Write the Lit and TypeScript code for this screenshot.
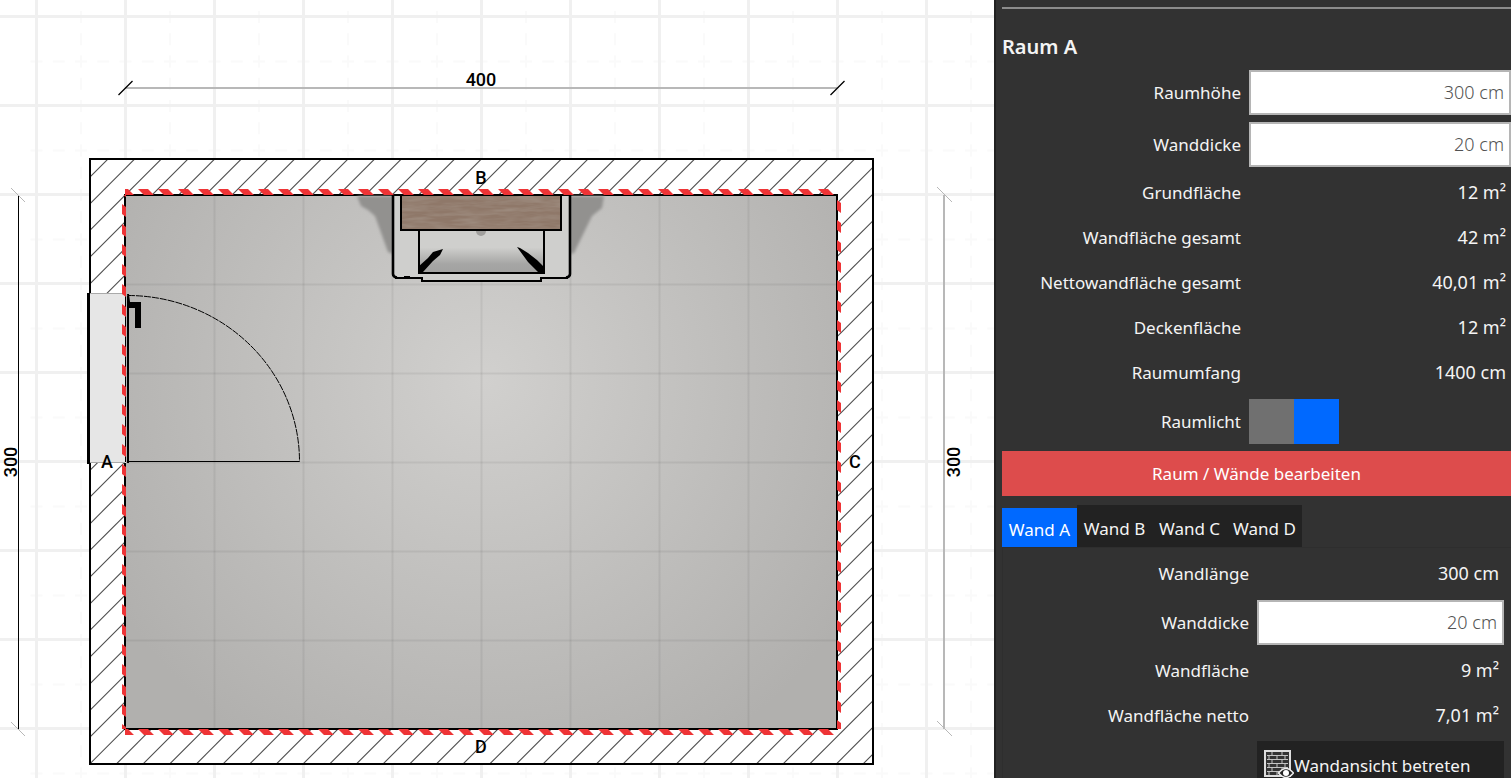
import { LitElement, html, svg, css } from "lit";
import { customElement, state } from "lit/decorators.js";

const range = (n: number) => Array.from({ length: n }, (_, i) => i);

@customElement("room-plan")
class RoomPlan extends LitElement {
  static styles = css`
    :host { display: block; overflow: hidden; background: #fff; }
    svg { display: block; width: 100%; height: 100%; }
    text { font: 500 18px Roboto, sans-serif; fill: #000; text-anchor: middle; }
    .line { stroke: #000; fill: none; }
    .soft { stroke: #b8b8b8; fill: none; }
    .red { fill: #ee3436; }
    .hatch { stroke: #4c4c4c; stroke-width: 1.1; fill: none; }
  `;

  private grid() {
    return svg`
      <g stroke="#fafafa" stroke-width="2" stroke-dasharray="12 10.25">
        ${range(12).map((i) => svg`<path d="M${-8 + i * 89} 11V800"/>`)}
        ${range(9).map((i) => svg`<path d="M30.5 ${61.5 + i * 89}H1600"/>`)}
      </g>
      <g stroke="#f0f0f0" stroke-width="3">
        ${range(18).map((i) => svg`<path d="M${36.5 + i * 89} 0V2000"/>`)}
        ${range(18).map((i) => svg`<path d="M0 ${16.5 + i * 89}H2000"/>`)}
      </g>`;
  }

  private stripes() {
    return svg`
      <g class="red">
        <g clip-path="url(#across)">
          ${range(37).map((i) => svg`<path d="M${118 + i * 20} 189h10l6 6h-10zM${118 + i * 20} 729h10l6 6h-10z"/>`)}
        </g>
        <g clip-path="url(#down)">
          ${range(28).map((i) => svg`<path d="M122 ${184 + i * 20}l4 3v10l-4-3zM837 ${180 + i * 20}l4 3v10l-4-3z"/>`)}
        </g>
      </g>`;
  }

  private basin() {
    return svg`
      <g>
        <path filter="url(#soft)" fill="#92918f" d="M357 196L393 196V254L388 252L375 216L368 210L361 206zM570 196H604L602 208L592 216L574 253L570 254z"/>
        <path fill="#cfcfcd" d="M393 196H570V277H541V281H421V277H393z"/>
        <rect x="419" y="231" width="125" height="41" fill="url(#bowl)"/>
        <circle cx="481" cy="231" r="5" fill="#a09f9d"/>
        <path class="line" stroke-width="2.6" d="M393 195V274Q393 277 397 277.500M570 195V274Q570 277 566 277.500"/>
        <path class="line" stroke-width="2" d="M395 278H422V281H541V278H568M404 277h6"/>
        <path class="line" stroke-width="2" d="M419 231V272M418 273H545M544 231V272"/>
        <path d="M418 267L428 258L433 252L443 249L440 255L433 261L423 272L418 274zM517 247L520 248L528 253L537 260L545 268V273H539L528 262z"/>
        <rect x="401" y="196" width="160" height="34" fill="#8f7869"/>
        <rect x="401" y="196" width="160" height="34" filter="url(#wood)"/>
        <rect class="line" x="401" y="195" width="160" height="35" stroke-width="2"/>
      </g>`;
  }

  private door() {
    return svg`
      <g>
        <rect x="90" y="294" width="36" height="169" fill="#e6e6e6"/>
        <path stroke="#aaa" d="M90 293.500H125M90 462.500H125"/>
        <path class="line" stroke-width="3" d="M88.500 293V464"/>
        <path class="line" stroke-width="1" d="M125.500 294V462"/>
        <path class="line" stroke-width="2" d="M128 296V463"/>
        <path class="line" stroke-width="1" d="M128 461.500H299.500"/>
        <path class="line" stroke-width="1" stroke-dasharray="7 1" d="M128 295.500A172 166 0 0 1 299.500 461.500"/>
        <path d="M127 294h2l1 8h11v26h-6v-20h-6z"/>
      </g>`;
  }

  render() {
    return html`
      <svg role="img" aria-label="Grundriss Raum A">
        <defs>
          <radialGradient id="floor" gradientUnits="userSpaceOnUse" cx="485" cy="380" r="430">
            <stop offset="0" stop-color="#d1d0ce"/>
            <stop offset="1" stop-color="#b1b0ae"/>
          </radialGradient>
          <linearGradient id="bowl" x2="0" y2="1">
            <stop offset="0" stop-color="#cfcfcd"/>
            <stop offset=".4" stop-color="#cfcfcd"/>
            <stop offset=".8" stop-color="#a6a6a5"/>
            <stop offset="1" stop-color="#a2a2a1"/>
          </linearGradient>
          <filter id="soft"><feGaussianBlur stdDeviation="1.500"/></filter>
          <filter id="wood" x="0" y="0" width="1" height="1">
            <feTurbulence type="fractalNoise" baseFrequency=".035 .25" numOctaves="3" seed="4"/>
            <feColorMatrix values="0 0 0 0 .38  0 0 0 0 .31  0 0 0 0 .26  1.200 0 0 0 -.4"/>
          </filter>
          <clipPath id="across"><rect x="125" y="180" width="712" height="560"/></clipPath>
          <clipPath id="down"><rect x="120" y="195" width="724" height="534"/></clipPath>
          <clipPath id="walls">
            <path clip-rule="evenodd" d="M90 159H873V764H90zM125 195V729H837V195z"/>
          </clipPath>
        </defs>
        ${this.grid()}
        <rect x="90" y="159" width="783" height="605" fill="#fff"/>
        <g class="hatch" clip-path="url(#walls)">
          ${range(54).map((i) => svg`<path d="M${107 + (i * 80) / 3 + 10} 150l-700 700"/>`)}
        </g>
        <rect x="125" y="195" width="712" height="534" fill="url(#floor)"/>
        <g stroke="#000" stroke-opacity=".06" stroke-width="2">
          ${range(7).map((i) => svg`<path d="M${214.5 + i * 89} 196V728"/>`)}
          ${range(5).map((i) => svg`<path d="M126 ${284.5 + i * 89}H836"/>`)}
        </g>
        <rect class="line" x="90" y="159" width="783" height="605" stroke-width="2"/>
        <rect class="line" x="125" y="195" width="712" height="534" stroke-width="2"/>
        ${this.basin()} ${this.door()} ${this.stripes()}
        <path class="soft" stroke-width="2" d="M125 88H837M944 195V729"/>
        <path class="line" stroke-width="1" d="M18.500 195V729"/>
        <path class="line" stroke-width="1.300" d="M118.500 95L132.500 81M830.500 95L844.500 81"/>
        <path class="soft" stroke-width="1" d="M11 188L25 202M11 722L25 736M937 187L952 202M937 721L952 736"/>
        <text x="481" y="86">400</text>
        <text transform="translate(17 462) rotate(-90)">300</text>
        <text transform="translate(960 462) rotate(-90)">300</text>
        <text x="107" y="468">A</text>
        <text x="481" y="184">B</text>
        <text x="855" y="468">C</text>
        <text x="481" y="753">D</text>
      </svg>`;
  }
}

@customElement("room-panel")
class RoomPanel extends LitElement {
  @state() private wall = "A";

  static styles = css`
    :host {
      display: block; box-sizing: border-box; background: #323232; color: #f4f4f4;
      border-left: 2px solid #222; padding: 7px 0 0 6px; overflow: auto; scrollbar-width: none;
      font: 17px/27px "Noto Sans", sans-serif;
    }
    hr { margin: 0; border: 0; height: 2px; background: #8c8c8c; }
    h2 { margin: 24px 0 5px; font-size: 20px; line-height: 28px; font-weight: 600; }
    .rows { display: grid; }
    .row { display: grid; grid-template-columns: 239px 1fr; column-gap: 8px; align-items: center; min-height: 45px; }
    .wall .row { grid-template-columns: 246px 1fr; }
    .row.field { min-height: 52px; }
    .label { text-align: right; }
    .value { text-align: right; padding-right: 5px; font-size: 18px; }
    input[type="text"] {
      box-sizing: border-box; width: 100%; height: 45px; border: 2px solid #b5b5b5; border-radius: 0;
      background: #fff; color: #525252; text-align: right; padding: 0 5px; font: inherit; font-size: 18px; font-weight: 300;
    }
    .row.light { min-height: 52px; }
    .switch {
      appearance: none; margin: 0; width: 90px; height: 45px;
      background: linear-gradient(90deg, #707070 50%, #0069ff 50%);
    }
    .switch:not(:checked) { background: linear-gradient(90deg, #a0a0a0 50%, #707070 50%); }
    button { border: 0; border-radius: 0; margin: 0; font: inherit; color: inherit; cursor: pointer; }
    .edit { display: block; width: 100%; height: 45px; margin-top: 4px; background: #dd4c4c; color: #fff; }
    .tabs { display: flex; align-items: flex-end; margin-top: 9px; }
    .tab { height: 42px; padding: 4px 6px 0; width: 75px; background: #222; white-space: nowrap; text-align: center; }
    .tab.on { height: 39px; background: #0069ff; color: #fff; }
    .wall { padding: 3px 7px 0 0; border-top: 1px solid #2e2e2e; border-left: 1px solid #2e2e2e; }
    .enter {
      display: flex; align-items: center; height: 48px; padding: 0 7px; width: 100%; margin-top: 3px;
      background: #222; text-align: left; white-space: nowrap;
    }
    .enter svg { width: 30px; height: 30px; flex: none; }
  `;

  private fact(label: string, value: string) {
    return html`<div class="row"><span class="label">${label}</span><span class="value">${value}</span></div>`;
  }

  private field(id: string, label: string, value: string) {
    return html`<div class="row field">
      <label class="label" for=${id}>${label}</label><input id=${id} type="text" .value=${value} />
    </div>`;
  }

  render() {
    return html`
      <hr />
      <h2>Raum A</h2>
      <div class="rows">
        ${this.field("height", "Raumhöhe", "300 cm")}
        ${this.field("thickness", "Wanddicke", "20 cm")}
        ${this.fact("Grundfläche", "12 m²")}
        ${this.fact("Wandfläche gesamt", "42 m²")}
        ${this.fact("Nettowandfläche gesamt", "40,01 m²")}
        ${this.fact("Deckenfläche", "12 m²")}
        ${this.fact("Raumumfang", "1400 cm")}
        <div class="row light">
          <label class="label" for="light">Raumlicht</label>
          <input id="light" class="switch" type="checkbox" role="switch" checked />
        </div>
      </div>
      <button class="edit">Raum / Wände bearbeiten</button>
      <div class="tabs" role="tablist">
        ${["A", "B", "C", "D"].map(
          (w) => html`<button class="tab ${w === this.wall ? "on" : ""}" role="tab"
            aria-selected=${w === this.wall} @click=${() => (this.wall = w)}>Wand ${w}</button>`
        )}
      </div>
      <div class="wall rows">
        ${this.fact("Wandlänge", "300 cm")}
        ${this.field("wall-thickness", "Wanddicke", "20 cm")}
        ${this.fact("Wandfläche", "9 m²")}
        ${this.fact("Wandfläche netto", "7,01 m²")}
        <div class="row">
          <span></span>
          <button class="enter">
            <svg viewBox="0 0 30 30" aria-hidden="true">
              <rect x="1" y="1" width="25" height="25" fill="#333" stroke="#ddd" stroke-width="2"/>
              <path d="M3 5.500H24M3 9.500H24M3 13.500H24M3 17.500H24M3 21.500H24M8 2v3M18 2v3M5 6v4M13 6v4M21 6v4M8 10v4M18 10v4M5 14v4M13 14v4M21 14v4M8 18v4M18 18v4M5 22v3M13 22v3" stroke="#c4c4c4" fill="none"/>
              <path d="M14.500 23Q22 14 29.500 23Q22 32 14.500 23z" fill="#222" stroke="#eee" stroke-width="1.500"/>
              <circle cx="22" cy="23" r="3" fill="#fff"/>
            </svg>
            Wandansicht betreten
          </button>
        </div>
      </div>
    `;
  }
}

@customElement("app-root")
class AppRoot extends LitElement {
  static styles = css`
    :host { display: flex; height: 100vh; overflow: hidden; }
    .plan { flex: 1; min-width: 0; }
    .panel { flex: none; width: 517px; }
  `;
  render() {
    return html`<room-plan class="plan"></room-plan><room-panel class="panel"></room-panel>`;
  }
}
